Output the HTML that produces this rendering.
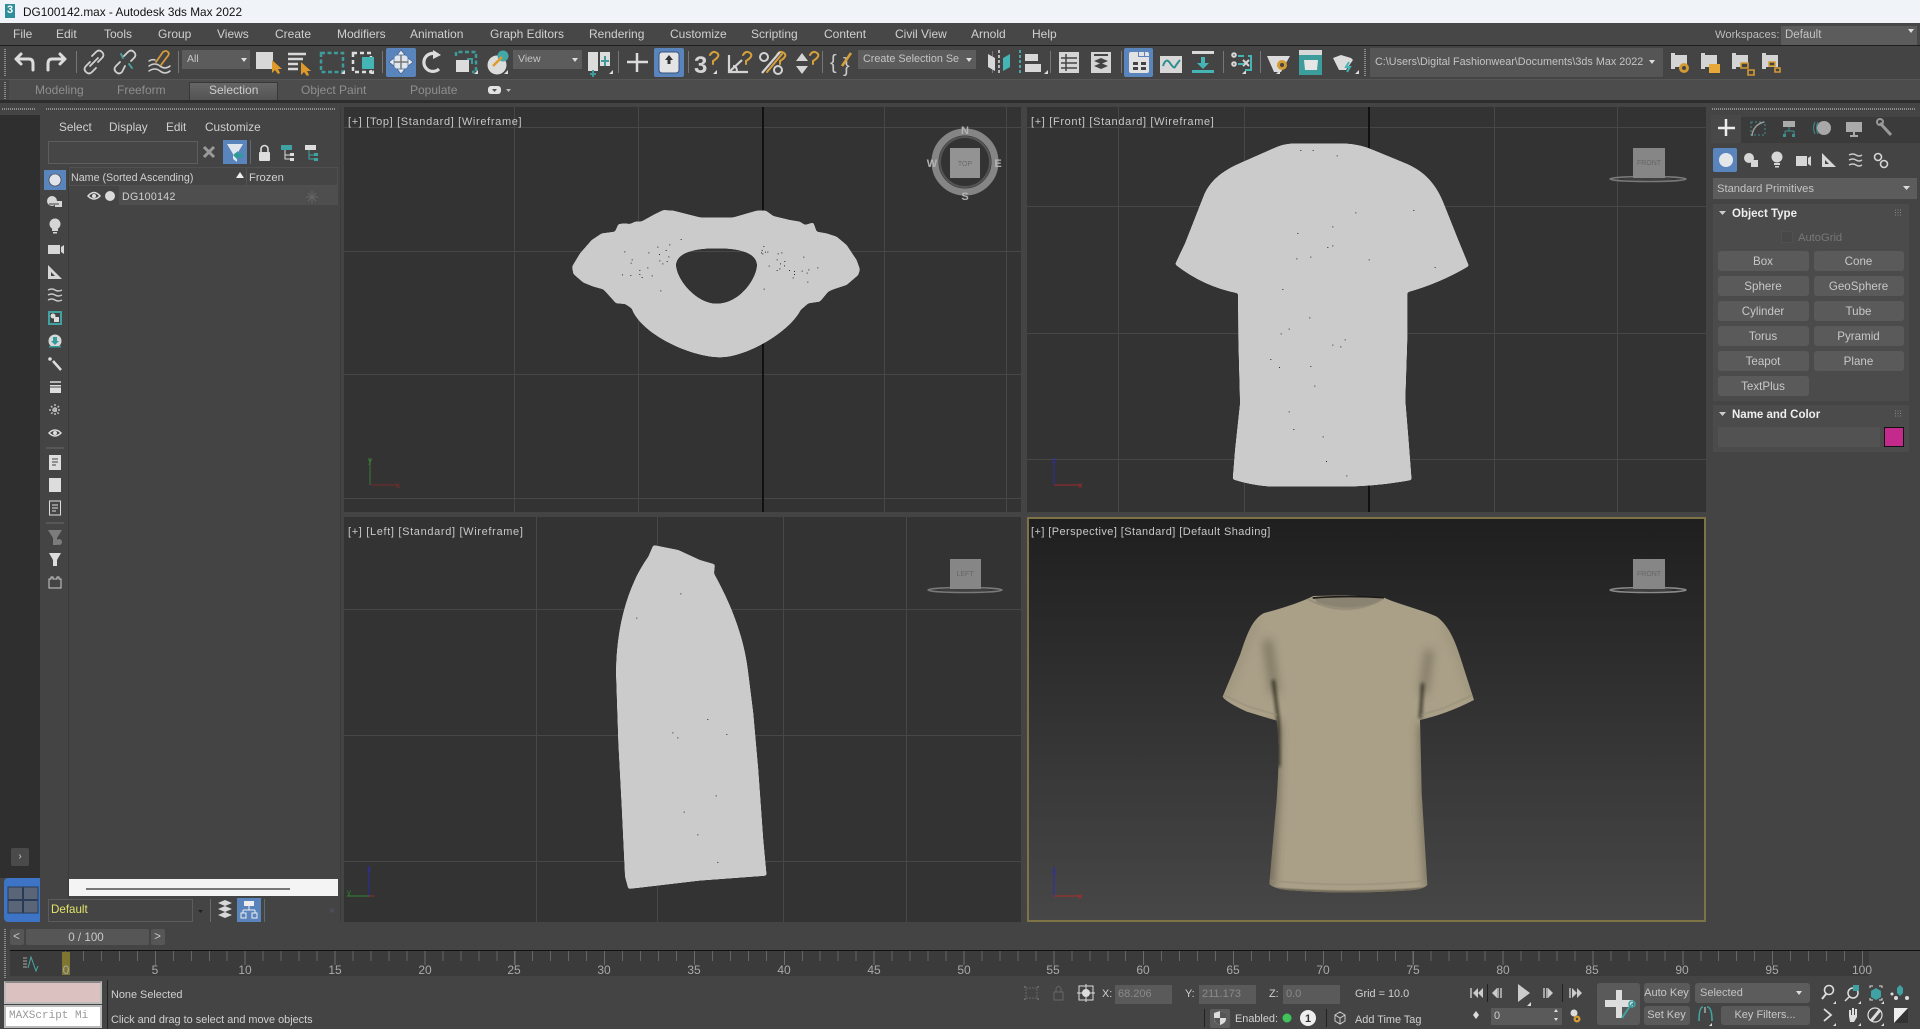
<!DOCTYPE html>
<html><head><meta charset="utf-8"><title>DG100142.max - Autodesk 3ds Max 2022</title>
<style>
html,body{margin:0;padding:0;width:1920px;height:1029px;overflow:hidden;background:#444;font:12px "Liberation Sans",sans-serif;color:#d0d0d0}
.t{position:absolute;white-space:nowrap;line-height:14px}
.b{position:absolute;box-sizing:border-box}
.btn{position:absolute;box-sizing:border-box;background:#5a5a5a;border-radius:3px;text-align:center;color:#c8c8c8;line-height:21px;height:20px;width:91px;font-size:11.6px;padding-right:1px}
.dd{position:absolute;box-sizing:border-box;background:#5c5c5c;color:#c4c4c4;padding-left:5px}
.vp{position:absolute;background:#333;overflow:hidden}
.g{position:absolute;background:#474747}
.lbl{position:absolute;left:4px;top:8px;font-size:11px;letter-spacing:.66px;color:#c8c8c8;white-space:nowrap;line-height:14px}
.grip{position:absolute;height:2px;background:repeating-linear-gradient(90deg,#8d8d8d 0 1px,transparent 1px 2px)}
.gripv{position:absolute;width:2px;background:repeating-linear-gradient(0deg,#8d8d8d 0 1px,transparent 1px 2px)}
.f{position:absolute;box-sizing:border-box;background:#5a5a5a;color:#8a8a8a;padding-left:3px;height:19px;line-height:19px}
.m{top:27px}
.n{color:#8f8f8f;top:83px}
.k{color:#aaa;transform:translateX(-50%);top:963px}
.s{font-size:10.9px}
svg{position:absolute;left:0;top:0}
</style></head><body>
<!-- title bar -->
<div class="b" style="left:0;top:0;width:1920px;height:23px;background:#f0f4f9"></div>
<div class="b" style="left:5px;top:4px;width:10px;height:14px;background:#2e8f9a;color:#fff;font:bold 11px/12px 'Liberation Sans',sans-serif;text-align:center">3</div>
<div class="t" style="left:23px;top:5px;color:#111;font-size:11.8px">DG100142.max - Autodesk 3ds Max 2022</div>
<!-- menu -->
<div class="b" style="left:0;top:23px;width:1920px;height:22px;background:#474747"></div>
<div class="b" style="left:0;top:45px;width:1920px;height:1px;background:#1f1f1f"></div>
<div class="t m" style="left:13px">File</div><div class="t m" style="left:56px">Edit</div><div class="t m" style="left:104px">Tools</div><div class="t m" style="left:158px">Group</div><div class="t m" style="left:217px">Views</div><div class="t m" style="left:275px">Create</div><div class="t m" style="left:337px">Modifiers</div><div class="t m" style="left:410px">Animation</div><div class="t m" style="left:490px">Graph Editors</div><div class="t m" style="left:589px">Rendering</div><div class="t m" style="left:670px">Customize</div><div class="t m" style="left:751px">Scripting</div><div class="t m" style="left:824px">Content</div><div class="t m" style="left:895px">Civil View</div><div class="t m" style="left:971px">Arnold</div><div class="t m" style="left:1032px">Help</div>
<div class="t" style="left:1715px;top:28px;font-size:11.2px;color:#bbb">Workspaces:</div>
<div class="dd" style="left:1781px;top:26px;width:136px;height:19px;line-height:19px;font-size:11.5px;padding-left:4px">Default</div>
<!-- main toolbar -->
<div class="gripv" style="left:4px;top:49px;height:27px"></div>
<div class="dd" style="left:182px;top:50px;width:68px;height:19px;line-height:19px;font-size:10.5px">All</div>
<div class="dd" style="left:513px;top:50px;width:69px;height:19px;line-height:19px;font-size:10.5px">View</div>
<div class="dd" style="left:858px;top:50px;width:118px;height:19px;line-height:18px;font-size:10.8px;padding-left:5px">Create Selection Se</div>
<div class="dd" style="left:1370px;top:48px;width:293px;height:29px;line-height:29px;font-size:10.8px;background:#555">C:\Users\Digital Fashionwear\Documents\3ds Max 2022</div>
<div class="gripv" style="left:1364px;top:49px;height:27px"></div>
<div class="b" style="left:386px;top:48px;width:30px;height:29px;background:#5a84bc;border-radius:2px"></div>
<div class="b" style="left:654px;top:48px;width:30px;height:29px;background:#5a84bc;border-radius:2px"></div>
<div class="b" style="left:1124px;top:48px;width:29px;height:29px;background:#5a84bc;border-radius:2px"></div>
<!-- ribbon -->
<div class="b" style="left:0;top:79px;width:1920px;height:1px;background:#565656"></div>
<div class="b" style="left:9px;top:80px;width:1911px;height:20px;background:#4c4c4c"></div>
<div class="gripv" style="left:4px;top:81px;height:18px"></div>
<div class="b" style="left:189px;top:82px;width:89px;height:18px;background:linear-gradient(#666,#535353);border:1px solid #383838;border-bottom:0"></div>
<div class="b" style="left:0;top:100px;width:1920px;height:3px;background:#2d2d2d"></div>
<div class="t n" style="left:35px">Modeling</div><div class="t n" style="left:117px">Freeform</div><div class="t n" style="left:209px;color:#ccc">Selection</div><div class="t n" style="left:301px">Object Paint</div><div class="t n" style="left:410px">Populate</div>
<!-- left strip / explorer -->
<div class="b" style="left:0;top:115px;width:40px;height:763px;background:#2f2f2f"></div>
<div class="grip" style="left:2px;top:108px;width:34px"></div>
<div class="grip" style="left:46px;top:108px;width:290px"></div>
<div class="grip" style="left:1712px;top:108px;width:204px"></div>
<div class="b" style="top:848px;width:18px;height:18px;left:11px;background:#4a4a4a;border-radius:2px;color:#ccc;text-align:center;line-height:18px;font-size:10px">&#8250;</div>
<div class="t" style="left:59px;top:120px;font-size:11.8px">Select</div><div class="t" style="left:109px;top:120px;font-size:11.8px">Display</div><div class="t" style="left:166px;top:120px;font-size:11.8px">Edit</div><div class="t" style="left:205px;top:120px;font-size:11.8px">Customize</div>
<div class="b" style="left:48px;top:141px;width:150px;height:23px;border:1px solid #5e5e5e;background:#464646"></div>
<div class="b" style="left:223px;top:140px;width:24px;height:24px;background:#5a84bc"></div>
<div class="b" style="left:250px;top:140px;width:1px;height:24px;background:#5f6a78"></div>
<div class="b" style="left:69px;top:167px;width:269px;height:19px;border:1px solid #505050;background:#454545"></div>
<div class="b" style="left:246px;top:167px;width:1px;height:38px;background:#525252"></div>
<div class="b" style="left:119px;top:186px;width:219px;height:19px;background:#4e4e4e"></div>
<div class="t" style="left:71px;top:171px;font-size:10.7px">Name (Sorted Ascending)</div>
<div class="t" style="left:249px;top:171px;font-size:11.2px">Frozen</div>
<div class="t" style="left:122px;top:190px;font-size:10.6px;letter-spacing:.3px">DG100142</div>
<div class="b" style="left:44px;top:170px;width:22px;height:20px;background:#5a84bc"></div>
<div class="b" style="left:68px;top:167px;width:1px;height:732px;background:#3a3a3a"></div>
<div class="b" style="left:340px;top:107px;width:1px;height:815px;background:#3c3c3c"></div>
<div class="b" style="left:69px;top:879px;width:269px;height:17px;background:#f4f4f4"></div>
<div class="b" style="left:86px;top:888px;width:204px;height:2px;background:#777"></div>
<div class="b" style="left:4px;top:878px;width:36px;height:44px;background:#3e74c6;border-radius:4px 0 0 4px"></div>
<div class="b" style="left:48px;top:899px;width:145px;height:23px;border:1px solid #5c5c5c;background:#444;color:#e3e36a;padding-left:2px;line-height:20px;font-size:11.6px">Default</div>
<div class="b" style="left:237px;top:898px;width:24px;height:24px;background:#5a84bc"></div>
<div class="b" style="left:210px;top:899px;width:1px;height:23px;background:#6a6a6a"></div>
<div class="b" style="left:264px;top:899px;width:1px;height:23px;background:#5f6a78"></div>
<div class="t" style="left:329px;top:904px;color:#57577a;font-size:10px;letter-spacing:-1px">&raquo;</div>

<!-- viewports -->
<div class="vp" style="left:344px;top:107px;width:677px;height:405px">
<div class="g" style="left:170px;top:0;width:1px;height:405px"></div><div class="g" style="left:294px;top:0;width:1px;height:405px"></div><div class="g" style="left:540px;top:0;width:1px;height:405px"></div><div class="g" style="left:662px;top:0;width:1px;height:405px"></div>
<div class="g" style="left:0;top:20px;width:677px;height:1px"></div><div class="g" style="left:0;top:144px;width:677px;height:1px"></div><div class="g" style="left:0;top:267px;width:677px;height:1px"></div><div class="g" style="left:0;top:391px;width:677px;height:1px"></div>
<div class="b" style="left:418px;top:0;width:2px;height:405px;background:#111"></div>
<div class="lbl">[+] [Top] [Standard] [Wireframe]</div></div>
<div class="vp" style="left:1027px;top:107px;width:679px;height:405px">
<div class="g" style="left:91px;top:0;width:1px;height:405px"></div><div class="g" style="left:217px;top:0;width:1px;height:405px"></div><div class="g" style="left:467px;top:0;width:1px;height:405px"></div><div class="g" style="left:590px;top:0;width:1px;height:405px"></div>
<div class="g" style="left:0;top:99px;width:679px;height:1px"></div><div class="g" style="left:0;top:226px;width:679px;height:1px"></div><div class="g" style="left:0;top:352px;width:679px;height:1px"></div><div class="g" style="left:0;top:20px;width:679px;height:1px"></div>
<div class="b" style="left:341px;top:0;width:2px;height:405px;background:#111"></div>
<div class="lbl">[+] [Front] [Standard] [Wireframe]</div></div>
<div class="vp" style="left:344px;top:517px;width:677px;height:405px">
<div class="g" style="left:192px;top:0;width:1px;height:405px"></div><div class="g" style="left:313px;top:0;width:1px;height:405px"></div><div class="g" style="left:439px;top:0;width:1px;height:405px"></div><div class="g" style="left:562px;top:0;width:1px;height:405px"></div>
<div class="g" style="left:0;top:92px;width:677px;height:1px"></div><div class="g" style="left:0;top:218px;width:677px;height:1px"></div><div class="g" style="left:0;top:344px;width:677px;height:1px"></div>
<div class="lbl">[+] [Left] [Standard] [Wireframe]</div></div>
<div class="vp" style="left:1027px;top:517px;width:679px;height:405px;box-sizing:border-box;border:2px solid #7d7344;background:linear-gradient(#1f1f1f,#474747)">
<div class="lbl" style="left:2px;top:6px;letter-spacing:.42px">[+] [Perspective] [Standard] [Default Shading]</div></div>

<!-- command panel -->
<div class="b" style="left:1711px;top:117px;width:209px;height:26px;background:#3b3b3b"></div>
<div class="b" style="left:1711px;top:115px;width:30px;height:28px;background:#484848"></div>
<div class="b" style="left:1713px;top:148px;width:24px;height:24px;background:#5a84bc;border-radius:2px"></div>
<div class="dd" style="left:1713px;top:178px;width:204px;height:21px;line-height:23px;font-size:11.2px;padding-left:4px">Standard Primitives</div>
<div class="b" style="left:1713px;top:204px;width:196px;height:197px;background:#4b4b4b"></div>
<div class="b" style="left:1713px;top:405px;width:196px;height:47px;background:#4b4b4b"></div>
<div class="t" style="left:1732px;top:207px;font-weight:bold;color:#eee;font-size:11.5px">Object Type</div>
<div class="t" style="left:1732px;top:408px;font-weight:bold;color:#eee;font-size:11.5px">Name and Color</div>
<div class="b" style="left:1781px;top:231px;width:12px;height:12px;border:1px solid #505050;background:#484848"></div>
<div class="t" style="left:1798px;top:231px;color:#777;font-size:11.2px">AutoGrid</div>
<div class="btn" style="left:1718px;top:251px">Box</div><div class="btn" style="left:1814px;top:251px;width:90px">Cone</div>
<div class="btn" style="left:1718px;top:276px">Sphere</div><div class="btn" style="left:1814px;top:276px;width:90px">GeoSphere</div>
<div class="btn" style="left:1718px;top:301px">Cylinder</div><div class="btn" style="left:1814px;top:301px;width:90px">Tube</div>
<div class="btn" style="left:1718px;top:326px">Torus</div><div class="btn" style="left:1814px;top:326px;width:90px">Pyramid</div>
<div class="btn" style="left:1718px;top:351px">Teapot</div><div class="btn" style="left:1814px;top:351px;width:90px">Plane</div>
<div class="btn" style="left:1718px;top:376px">TextPlus</div>
<div class="b" style="left:1718px;top:427px;width:162px;height:20px;background:#525252"></div>
<div class="b" style="left:1884px;top:427px;width:20px;height:20px;background:#c42a8c;border:1px solid #111"></div>

<!-- time slider -->
<div class="gripv" style="left:4px;top:928px;height:50px"></div>
<div class="btn" style="left:10px;top:929px;width:14px;height:16px;line-height:15px;background:#565656;border-radius:2px">&lt;</div>
<div class="btn" style="left:26px;top:929px;width:123px;height:16px;line-height:17px;background:#565656;border-radius:2px;padding-right:3px">0 / 100</div>
<div class="btn" style="left:151px;top:929px;width:14px;height:16px;line-height:15px;background:#565656;border-radius:2px">&gt;</div>
<div class="b" style="left:10px;top:950px;width:1910px;height:1px;background:#111"></div>
<div class="b" style="left:10px;top:951px;width:1859px;height:25px;background:#3b3b3b"></div>
<div class="b" style="left:65px;top:951px;width:1798px;height:10px;background:repeating-linear-gradient(90deg,#666 0 1px,transparent 1px 17.97px)"></div>
<div class="b" style="left:65px;top:951px;width:1798px;height:14px;background:repeating-linear-gradient(90deg,#6c6c6c 0 1px,transparent 1px 89.85px)"></div>
<div class="b" style="left:62px;top:952px;width:8px;height:23px;background:#7d7530"></div>
<div class="t k" style="left:66px">0</div><div class="t k" style="left:155px">5</div><div class="t k" style="left:245px">10</div><div class="t k" style="left:335px">15</div><div class="t k" style="left:425px">20</div><div class="t k" style="left:514px">25</div><div class="t k" style="left:604px">30</div><div class="t k" style="left:694px">35</div><div class="t k" style="left:784px">40</div><div class="t k" style="left:874px">45</div><div class="t k" style="left:964px">50</div><div class="t k" style="left:1053px">55</div><div class="t k" style="left:1143px">60</div><div class="t k" style="left:1233px">65</div><div class="t k" style="left:1323px">70</div><div class="t k" style="left:1413px">75</div><div class="t k" style="left:1503px">80</div><div class="t k" style="left:1592px">85</div><div class="t k" style="left:1682px">90</div><div class="t k" style="left:1772px">95</div><div class="t k" style="left:1862px">100</div>

<!-- status -->
<div class="b" style="left:4px;top:981px;width:98px;height:23px;background:#dcc1c1;border:2px solid #bbb;border-top-color:#888"></div>
<div class="b" style="left:4px;top:1005px;width:98px;height:23px;background:#fff;border:2px solid #bbb;color:#999;font:11px/19px 'Liberation Mono',monospace;padding-left:3px;overflow:hidden;white-space:nowrap">MAXScript Mi</div>
<div class="b" style="left:107px;top:980px;width:1px;height:49px;background:#222"></div>
<div class="t s" style="left:111px;top:988px">None Selected</div>
<div class="t s" style="left:111px;top:1013px">Click and drag to select and move objects</div>
<div class="t s" style="left:1102px;top:987px">X:</div><div class="f" style="left:1115px;top:985px;width:57px;font-size:11px">68.206</div>
<div class="t s" style="left:1185px;top:987px">Y:</div><div class="f" style="left:1199px;top:985px;width:57px;font-size:11px">211.173</div>
<div class="t s" style="left:1269px;top:987px">Z:</div><div class="f" style="left:1283px;top:985px;width:57px;font-size:11px">0.0</div>
<div class="t s" style="left:1355px;top:987px">Grid = 10.0</div>
<div class="b" style="left:1210px;top:1009px;width:20px;height:19px;background:#5c5c5c;border-radius:2px"></div>
<div class="t s" style="left:1235px;top:1012px">Enabled:</div>
<div class="t s" style="left:1355px;top:1013px">Add Time Tag</div>
<div class="b" style="left:1597px;top:983px;width:43px;height:42px;background:#5a5a5a;border-radius:3px"></div>
<div class="btn" style="left:1644px;top:983px;width:46px;height:20px;line-height:20px;font-size:11px">Auto Key</div>
<div class="dd" style="left:1695px;top:983px;width:115px;height:20px;line-height:20px;font-size:11px;border-radius:3px">Selected</div>
<div class="btn" style="left:1644px;top:1006px;width:46px;height:19px;line-height:19px;font-size:11px">Set Key</div>
<div class="btn" style="left:1721px;top:1006px;width:89px;height:19px;line-height:19px;font-size:11px">Key Filters...</div>
<div class="f" style="left:1491px;top:1008px;width:71px;height:17px;line-height:17px;color:#ccc;font-size:11px">0</div>

<!-- Artwork -->
<svg width="1920" height="1029" viewBox="0 0 1920 1029" fill="none" style="pointer-events:none">
<defs>
<filter id="bl1" x="-30%" y="-30%" width="160%" height="160%"><feGaussianBlur stdDeviation="14"/></filter>
<filter id="bl2" x="-30%" y="-30%" width="160%" height="160%"><feGaussianBlur stdDeviation="5"/></filter>
<filter id="bl3" x="-10%" y="-10%" width="120%" height="120%"><feGaussianBlur stdDeviation="1.2"/></filter>
<filter id="sm" x="-5%" y="-5%" width="110%" height="110%" color-interpolation-filters="sRGB"><feGaussianBlur in="SourceAlpha" stdDeviation="3"/><feComponentTransfer result="a"><feFuncA type="linear" slope="10" intercept="-4.5"/></feComponentTransfer><feFlood flood-color="#cbcbcb"/><feComposite in2="a" operator="in"/></filter>
<clipPath id="tee"><path d="M385 115C340 135 285 150 250 160C215 180 200 225 180 285L128 410Q135 425 200 455L290 482C300 560 295 640 290 720L268 972Q280 985 320 990Q500 1005 700 990Q730 987 742 975L725 700 720 480Q800 462 882 420L845 305C825 240 805 195 770 170C730 150 660 135 610 112L500 106 400 108Z"/></clipPath>
</defs>

<!-- top view shirt -->
<g transform="translate(560,200) scale(.33333)">
<path fill="#cbcbcb" filter="url(#sm)" fill-rule="evenodd" d="M310 30L340 32 420 52 520 52 590 32 618 32 640 48 690 60 720 65 735 75 760 67 770 95 800 100 830 110 860 135 890 180 900 208 895 225 860 255 820 268 805 275 780 305 745 310 722 330C690 395 560 472 480 472C390 472 240 400 215 325L195 312 168 310 150 290 130 268 100 260 70 248 40 222 36 200 60 160 95 120 125 100 165 95 175 72 195 70 210 72 225 65 245 64 285 42ZM348 195C350 165 385 150 440 146L500 146C555 150 590 165 591 195C590 235 540 311 470 311C410 311 350 240 348 195Z"/>
<path fill="#2c2c2c" d="M362 117h3v3h-3zM193 154h3v3h-3zM265 157h3v3h-3zM292 140h3v3h-3zM328 133h3v3h-3zM317 150h3v3h-3zM297 162h3v3h-3zM298 181h3v3h-3zM325 169h3v3h-3zM320 183h3v3h-3zM307 190h3v3h-3zM215 178h3v3h-3zM212 188h3v3h-3zM262 202h3v3h-3zM238 210h3v3h-3zM238 222h3v3h-3zM245 231h3v3h-3zM186 223h3v3h-3zM211 225h3v3h-3zM275 226h3v3h-3zM301 271h3v3h-3zM610 138h3v3h-3zM605 150h3v3h-3zM603 157h3v3h-3zM622 155h3v3h-3zM615 155h3v3h-3zM607 160h3v3h-3zM653 160h3v3h-3zM664 157h3v3h-3zM650 178h3v3h-3zM660 190h3v3h-3zM673 183h3v3h-3zM672 196h3v3h-3zM626 197h3v3h-3zM687 210h3v3h-3zM650 210h3v3h-3zM658 205h3v3h-3zM702 213h3v3h-3zM725 212h3v3h-3zM745 208h3v3h-3zM772 202h3v3h-3zM730 170h3v3h-3zM740 218h3v3h-3zM702 222h3v3h-3zM698 232h3v3h-3zM742 245h3v3h-3zM611 266h3v3h-3z"/>
</g>
<!-- front view shirt -->
<g transform="translate(1160,130) scale(.33333)">
<path fill="#cbcbcb" filter="url(#sm)" d="M405 40L550 40Q600 42 640 60L730 97C790 120 830 160 855 230L895 330 927 408Q840 460 742 487L742 630 736 810 745 920 755 1050Q650 1070 540 1070L330 1070Q270 1065 218 1048L225 960 240 820 235 630 234 490Q130 470 45 403L75 340 130 200C150 150 190 120 250 95L340 55Q370 40 405 40Z"/>
<path fill="#2c2c2c" d="M421 60h3v3h-3zM458 60h3v3h-3zM530 76h3v3h-3zM586 247h3v3h-3zM760 240h3v3h-3zM517 289h3v3h-3zM412 309h3v3h-3zM517 346h3v3h-3zM502 351h3v3h-3zM451 380h3v3h-3zM409 385h3v3h-3zM626 388h3v3h-3zM824 411h3v3h-3zM367 477h3v3h-3zM448 562h3v3h-3zM386 596h3v3h-3zM362 610h3v3h-3zM554 628h3v3h-3zM517 644h3v3h-3zM541 649h3v3h-3zM331 687h3v3h-3zM357 711h3v3h-3zM451 708h3v3h-3zM463 767h3v3h-3zM386 844h3v3h-3zM400 897h3v3h-3zM488 919h3v3h-3zM498 993h3v3h-3zM559 1036h3v3h-3z"/>
</g>
<!-- left view shirt -->
<g transform="translate(600,530) scale(.33333)">
<path fill="#cbcbcb" filter="url(#sm)" d="M160 45L235 60 300 90 345 103 342 130C380 200 430 300 445 430L460 550 475 720 490 930 500 1037 300 1052 85 1077 75 1040 65 830 55 640 48 430C48 300 80 170 145 80Z"/>
<path fill="#2c2c2c" d="M241 190h3v3h-3zM109 263h3v3h-3zM322 567h3v3h-3zM217 607h3v3h-3zM379 612h3v3h-3zM232 622h3v3h-3zM347 796h3v3h-3zM251 845h3v3h-3zM292 913h3v3h-3zM352 996h3v3h-3z"/>
</g>
<!-- perspective tee -->
<g transform="translate(1180,560) scale(.33333)">
<path fill="#aaa088" d="M385 115C340 135 285 150 250 160C215 180 200 225 180 285L128 410Q135 425 200 455L290 482C300 560 295 640 290 720L268 972Q280 985 320 990Q500 1005 700 990Q730 987 742 975L725 700 720 480Q800 462 882 420L845 305C825 240 805 195 770 170C730 150 660 135 610 112L500 106 400 108Z"/>
<g clip-path="url(#tee)">
<g filter="url(#bl1)" opacity=".8">
<path stroke="#4a4538" stroke-width="22" d="M288 490L282 720 268 985"/>
<path stroke="#4a4538" stroke-width="18" d="M728 490L732 720 748 985"/>
<path stroke="#5c5646" stroke-width="18" d="M262 240L285 400"/>
<path stroke="#5c5646" stroke-width="16" d="M748 270L730 400"/>
<path stroke="#8b8470" stroke-width="12" d="M125 420L180 290 225 185M885 420L845 300 795 185"/>
</g>
<g filter="url(#bl2)" opacity=".85">
<path stroke="#15140f" stroke-width="8" d="M280 360L295 480 296 620"/>
<path stroke="#15140f" stroke-width="8" d="M728 370L721 475"/>
</g>
<g filter="url(#bl3)">
<path stroke="#958d78" stroke-width="3" d="M130 405L205 440 292 465M722 465L790 445 878 405M272 962Q500 985 740 962"/>
<path stroke="#736c5a" stroke-width="8" d="M268 985Q500 1006 745 985"/>
<path stroke="#8d8571" stroke-width="4" d="M385 118Q500 178 610 116"/>
</g>
</g>
<path fill="#8a8371" d="M400 113Q500 108 612 113L590 128Q500 160 412 128Z" filter="url(#bl3)"/>
<path stroke="#1b1a17" stroke-width="5" d="M398 114Q500 106 612 113"/>
</g>

<!-- view gizmos -->
<g>
<circle cx="965" cy="162" r="30" stroke="#858585" stroke-width="7"/>
<circle cx="965" cy="162" r="25" stroke="#555" stroke-width="2"/>
<rect x="950" y="148" width="30" height="30" fill="#939393"/>
<text x="965" y="166" text-anchor="middle" font-size="7" fill="#6a6a6a" font-family="Liberation Sans">TOP</text>
<g font-family="Liberation Sans" font-weight="bold" font-size="11" fill="#b4b4b4" text-anchor="middle">
<text x="965" y="134">N</text><text x="998" y="167">E</text><text x="965" y="200">S</text><text x="932" y="167">W</text></g>
<ellipse cx="1648" cy="179" rx="38" ry="2.500" stroke="#7a7a7a" stroke-width="1.500"/><ellipse cx="1648" cy="179" rx="26" ry="1.200" fill="#404040"/><rect x="1633" y="148" width="32" height="30" fill="#868686"/><text x="1649" y="165" text-anchor="middle" font-size="7" fill="#666" font-family="Liberation Sans">FRONT</text>
<ellipse cx="1648" cy="590" rx="38" ry="2.500" stroke="#8a8a8a" stroke-width="1.500"/><ellipse cx="1648" cy="590" rx="26" ry="1.200" fill="#404040"/><rect x="1633" y="559" width="32" height="30" fill="#868686"/><text x="1649" y="576" text-anchor="middle" font-size="7" fill="#666" font-family="Liberation Sans">FRONT</text>
<ellipse cx="965" cy="590" rx="37" ry="2.500" stroke="#7a7a7a" stroke-width="1.500"/><ellipse cx="965" cy="590" rx="26" ry="1.200" fill="#404040"/><rect x="950" y="559" width="31" height="30" fill="#868686"/><text x="965" y="576" text-anchor="middle" font-size="7" fill="#666" font-family="Liberation Sans">LEFT</text>
</g>
<!-- tripods -->
<g stroke-width="1">
<path stroke="#3a7a3a" d="M370 485V458"/><path stroke="#7a2a2a" d="M370 485H398"/><path stroke="#2a2a8a" d="M370 485v1"/>
<path stroke="#2b2ba0" d="M1054 485V458"/><path stroke="#a02a2a" d="M1054 485H1082"/>
<path stroke="#2b2ba0" d="M369 896V866"/><path stroke="#2c8a2c" d="M347 896H369"/><path stroke="#a02a2a" d="M369 896h5"/>
<path stroke="#2b2bb0" d="M1054 896V867"/><path stroke="#b02a2a" d="M1054 896H1082"/>
</g>
<g font-family="Liberation Sans" font-size="8">
<text x="368" y="463" fill="#3a8a3a">y</text><text x="396" y="488" fill="#8a2a2a">x</text>
<text x="1052" y="463" fill="#3030a0">z</text><text x="1078" y="488" fill="#a02a2a">x</text>
<text x="367" y="872" fill="#3030a0">z</text><text x="347" y="895" fill="#2c8a2c">y</text>
<text x="1052" y="874" fill="#3030a0">z</text><text x="1078" y="899" fill="#b02a2a">x</text>
</g>

<!-- toolbar separators -->
<path stroke="#777" d="M76.500 51V73M178.500 51V73M382.500 51V73M618.500 51V73M688.500 51V73M822.500 51V73M992.500 51V73M1050.500 51V73M1121.500 51V73M1223.500 51V73M1260.500 51V73"/>
<!-- undo/redo -->
<g stroke="#dcdcdc" stroke-width="3" stroke-linecap="round" stroke-linejoin="round">
<path d="M17 59H29Q33 59 33 64V70M21 54L16 59 21 64"/>
<path d="M64 59H52Q48 59 48 64V70M60 54L65 59 60 64"/>
</g>
<!-- links -->
<g stroke="#d0d0d0" stroke-width="1.800" stroke-linecap="round">
<path d="M92 56L96 52Q99 49 102 52T102 58L98 62M96 68L92 72Q89 75 86 72T86 66L90 62M90 66L98 58"/>
<path d="M124 56L128 52Q131 49 134 52T134 58L131 61M125 66L122 72Q119 75 116 72T116 66L120 62"/>
<path stroke="#4aa9a9" d="M121 54l2 4M132 68l-3-4"/>
<path d="M149 66Q155 62 160 66T170 66M149 71Q155 67 160 71T170 71M149 61Q152 59 155 60" stroke-width="1.500"/>
<path stroke="#d79a3a" d="M156 62L163 52Q166 50 168 52T167 57L161 65"/>
</g>
<path fill="#ddd" d="M241 58h6l-3 4zM572 58h6l-3 4zM966 58h6l-3 4zM1649 60h6l-3 4zM1908 29h6l-3 4zM1796 991h6l-3 4z"/>
<!-- select tools -->
<rect x="256" y="52" width="17" height="17" fill="#d8d8d8"/><path fill="#e09a2a" d="M272 60L272 73 275 70 278 74 280 73 278 69 282 69Z"/>
<path stroke="#d8d8d8" stroke-width="2.500" d="M288 54H306M288 59H303M288 64H298M288 69H298"/><path fill="#e09a2a" d="M301 62V75L304 72 307 76 309 75 307 71 311 71Z"/>
<rect x="321" y="53" width="22" height="19" stroke="#3f9b9b" stroke-width="2.500" stroke-dasharray="4 2.500"/>
<path fill="#ddd" d="M345 70v4h-4zM374 70v4h-4zM478 70v4h-4zM508 70v4h-4zM613 70v4h-4zM717 70v4h-4zM1048 70v4h-4zM1246 70v4h-4zM1359 70v4h-4zM1280 70v4h-4z"/>
<rect x="353" y="53" width="18" height="19" stroke="#ddd" stroke-width="2.500" stroke-dasharray="4 3"/><rect x="362" y="57" width="12" height="12" fill="#45b4b4"/>
<!-- move -->
<circle cx="401" cy="62" r="8" fill="#dfe6ee"/><g fill="#e8edf3" stroke="#3d5f8c" stroke-width=".7"><path d="M401 50l4 5h-8zM401 74l4-5h-8zM389 62l5-4v8zM413 62l-5-4v8z"/></g>
<path stroke="#777" stroke-width="1.500" d="M401 55V69M394 62H408"/>
<!-- rotate -->
<path stroke="#dcdcdc" stroke-width="3.200" d="M439 69A9 9 0 1 1 438 55"/><path fill="#dcdcdc" d="M433 50l8 5-8 4z"/>
<!-- scale -->
<path stroke="#3f9b9b" stroke-width="2.500" stroke-dasharray="4 2.500" d="M456 56V52H476V72H472"/><rect x="456" y="60" width="13" height="12" fill="#dcdcdc"/>
<path stroke="#3f9b9b" stroke-width="2" d="M467 59H472V64"/>
<!-- placement -->
<circle cx="497" cy="65" r="9.500" fill="#dcdcdc"/><circle cx="503" cy="56" r="5.500" fill="#43a8a8"/><path stroke="#e09a2a" stroke-width="2.500" d="M493 66L502 57"/>
<!-- pivot -->
<rect x="588" y="52" width="10" height="19" fill="#dcdcdc"/><rect x="600" y="52" width="10" height="14" fill="#dcdcdc"/><path stroke="#3f9b9b" stroke-width="2" d="M593 70V77M590 74H596M605 56V66M601 61H609"/>
<!-- manipulate -->
<path stroke="#dcdcdc" stroke-width="2.500" d="M637 53V72M627 62H648"/>
<rect x="659" y="52" width="20" height="21" rx="3" fill="#e4e4e4" stroke="#34527d"/><path fill="#333" d="M669 55l4 5h-2.500v4h-3v-4H665z"/>
<!-- snap -->
<text x="694" y="73" font-family="Liberation Sans" font-weight="bold" font-size="24" fill="#d4d4d4">3</text>
<g stroke="#d6a13a" stroke-width="2" stroke-linecap="round"><path d="M710 55Q713 50 717 53T713 61V64M743 55Q746 50 750 53T746 61V64M777 55Q780 50 784 53T780 61V64M810 55Q813 50 817 53T813 61V64"/><path d="M767 72L782 54"/></g>
<path stroke="#d4d4d4" stroke-width="2.200" d="M729 55V72H748M729 72L742 60"/><path stroke="#d4d4d4" stroke-width="2" d="M737 72Q737 66 733 66"/>
<circle cx="764" cy="57" r="4" stroke="#d4d4d4" stroke-width="2"/><circle cx="778" cy="70" r="4" stroke="#d4d4d4" stroke-width="2"/><path stroke="#d4d4d4" stroke-width="2.200" d="M762 73L780 52"/>
<path fill="#d4d4d4" d="M802 53l6 8h-12zM802 74l6-8h-12z"/>
<!-- named sel -->
<text x="830" y="69" font-family="Liberation Sans" font-size="20" fill="#c8c8c8">{</text><text x="843" y="72" font-family="Liberation Sans" font-size="20" fill="#c8c8c8">}</text>
<path stroke="#d6a13a" stroke-width="2.500" d="M842 66L851 53"/>
<!-- mirror / align -->
<path fill="#d8d8d8" d="M988 54l7 4v13l-7-4z"/><path fill="#45b4b4" d="M1010 54l-7 4v13l7-4z"/><path stroke="#ddd" stroke-width="1.500" stroke-dasharray="3 2" d="M999 50V75"/>
<path stroke="#45b4b4" stroke-width="1.800" stroke-dasharray="3 2" d="M1020 50V74"/><rect x="1025" y="54" width="13" height="7" fill="#d8d8d8"/><rect x="1025" y="64" width="16" height="8" fill="#d8d8d8"/>
<!-- tables -->
<rect x="1059" y="52" width="20" height="21" fill="#d4d4d4"/><path stroke="#444" stroke-width="1.500" d="M1061 58H1077M1061 63H1077M1061 68H1077M1066 54V71"/>
<rect x="1091" y="52" width="20" height="21" fill="#d4d4d4"/><path fill="#444" d="M1094 54H1108V56H1094zM1101 58l7 3-7 3-7-3zM1101 63l7 3-7 3-7-3z"/>
<rect x="1129" y="52" width="20" height="21" rx="2" fill="#e2e2e2"/><path fill="#444" d="M1133 62h5v3h-5zM1141 62h5v3h-5zM1133 67h5v3h-5zM1141 67h5v3h-5z"/><path fill="#5a84bc" d="M1138 52h1v5h-1zM1144 52h1v5h-1zM1139 56h10v1h-10z"/>
<rect x="1160" y="51" width="22" height="22" fill="#d8d8d8"/><path fill="#444" d="M1160 51h22v5h-22z"/><path stroke="#2f8f8f" stroke-width="2" d="M1163 66Q1166 57 1170 63T1175 67 1180 60"/>
<path fill="#d8d8d8" d="M1192 51h22v3h-22z"/><path fill="#45b4b4" d="M1201 57h4v6h4l-6 6-6-6h4zM1192 70h22v3h-22z"/>
<!-- schematic -->
<g stroke="#d8d8d8" stroke-width="2"><circle cx="1234" cy="55" r="1.800"/><circle cx="1234" cy="64" r="1.800"/><path d="M1243 60l6 6M1249 60l-6 6"/></g><path stroke="#45b4b4" stroke-width="2" d="M1238 56h6M1238 64h6M1248 56h3V70h-6"/>
<!-- material/render -->
<path fill="#dcdcdc" d="M1267 56H1290L1281 72H1274Z"/><circle cx="1282" cy="65" r="5" fill="#d49a33"/><circle cx="1282" cy="65" r="2" fill="#444"/>
<rect x="1299" y="50" width="23" height="25" fill="#3d9c9c"/><path fill="#d8d8d8" d="M1299 50h23v5h-23z"/><path fill="#e6e6e6" d="M1304 60h14l-1 10h-12z"/>
<path fill="#dcdcdc" d="M1333 58l8-3 10 3 2 2-7 10h-7z"/><path stroke="#45b4b4" stroke-width="2" d="M1349 62l-3 5h4l-3 5"/>
<!-- project icons -->
<g fill="#d4d4d4"><path d="M1671 53h4v16h-4zM1675 55h12v12h-12zM1701 53h4v16h-4zM1705 55h12v12h-12zM1732 53h4v16h-4zM1736 55h12v12h-12zM1762 53h4v16h-4zM1766 55h12v12h-12z"/></g>
<circle cx="1684" cy="68" r="5" fill="#d49a33"/><circle cx="1684" cy="68" r="2" fill="#444"/>
<rect x="1709" y="64" width="11" height="9" fill="#e8a838"/>
<path stroke="#d49a33" stroke-width="1.600" fill="#444" d="M1741 63h7v5h-7zM1748 70h6v5h-6zM1769 62h6v4h-6zM1775 68h5v4h-5z"/>
<!-- ribbon pill -->
<rect x="488" y="86" width="13" height="8" rx="3" fill="#e2e2e2"/><path fill="#555" d="M492 89h5l-2.500 3z"/><path fill="#bbb" d="M506 89h5l-2.500 3z"/>
<!-- explorer icons -->
<path stroke="#9a9a9a" stroke-width="3" d="M204 147l10 10M214 147l-10 10"/>
<path fill="#dfe6ee" d="M227 144H243L237 154V162L233 159V154Z"/><path fill="#2e9a9a" d="M233 155l5-4v2.500h5v4h-5v2.500z"/>
<rect x="259" y="152" width="11" height="9" rx="1" fill="#ddd"/><path stroke="#ddd" stroke-width="1.600" d="M261 152v-3a3.500 3.500 0 0 1 7 0v3"/>
<rect x="281" y="145" width="11" height="5" fill="#3fa3a3"/><path stroke="#ddd" d="M285 150V159H290M285 155H290"/><path fill="#ddd" d="M290 153h4v3h-4zM290 158h4v3h-4z"/>
<rect x="305" y="145" width="11" height="5" fill="#ddd"/><path stroke="#3fa3a3" d="M309 150V159H314M309 155H314"/><path fill="#3fa3a3" d="M314 153h4v3h-4zM314 158h4v3h-4z"/>
<path fill="#eee" d="M240 172l4 6h-8z"/>
<path d="M88 196Q94 189 100 196Q94 202 88 196Z" stroke="#ddd" stroke-width="1.500"/><circle cx="94" cy="196" r="2" fill="#ddd"/><circle cx="110" cy="196" r="5" fill="#d9d9d9"/>
<path stroke="#666" d="M312 191V203M306 197H318M308 193l8 8M316 193l-8 8"/>
<!-- explorer column -->
<g fill="#d6d6d6">
<circle cx="55" cy="180" r="6" fill="#e0e4ea" stroke="#333" stroke-width=".6"/>
<circle cx="52" cy="201" r="5"/><path d="M55 201h7v6h-7z"/><path stroke="#3c3c3c" d="M49 204h10"/>
<circle cx="55" cy="224" r="5.500"/><path d="M52 229h6v2h-6zM53 232h4v1.500h-4z"/>
<path d="M48 245h12v9h-12zM61 247l3-2v9l-3-2z"/>
<path fill-rule="evenodd" d="M48 265l14 14h-14zM51 272v4h4z"/>
</g>
<path stroke="#c9c9c9" stroke-width="1.400" d="M48 290Q52 288 55 290T62 290M48 295Q52 293 55 295T62 295M48 300Q52 298 55 300T62 300"/>
<rect x="49" y="312" width="12" height="12" stroke="#3fa3a3" stroke-width="2"/><circle cx="53" cy="316" r="2.500" fill="#ddd"/><rect x="54" y="317" width="5" height="5" fill="#ddd"/>
<circle cx="55" cy="341" r="6.500" fill="#d6d6d6"/><path fill="#2f9d9d" d="M53 337h4v4h2l-4 4-4-4h2zM49 346h12v1.500h-12z"/>
<circle cx="50" cy="359" r="1.800" fill="#ddd"/><path stroke="#ddd" stroke-width="2.500" d="M53 361L61 370"/>
<path stroke="#ddd" stroke-width="1.500" d="M50 382h11"/><rect x="50" y="385" width="11" height="8" fill="#ddd"/><path stroke="#444" d="M50 387h11"/>
<path stroke="#bbb" stroke-width="1.500" stroke-dasharray="2 1" d="M55 404v12M49 410h12M51 406l8 8M59 406l-8 8"/>
<path d="M49 433Q55 427 61 433Q55 439 49 433Z" stroke="#ddd" stroke-width="1.500"/><circle cx="55" cy="433" r="2" fill="#ddd"/>
<path stroke="#6a6a6a" d="M46 448H64M46 523H64"/>
<rect x="49" y="455" width="12" height="15" fill="#ddd"/><path stroke="#444" d="M52 459h6M52 462h6M52 465h4"/>
<rect x="49" y="478" width="12" height="14" fill="#ddd"/>
<rect x="49.500" y="501" width="11" height="14" stroke="#ddd"/><path stroke="#ddd" d="M52 505h6M52 508h6M52 511h4"/>
<path fill="#7c7c7c" d="M48 530H62L57 538V545H53V538Z"/><circle cx="59" cy="542" r="3" fill="#7c7c7c"/>
<path fill="#ddd" d="M49 553H61L57 560V566H53V560Z"/>
<path stroke="#ccc" d="M49 579v9h12v-9h-2v-2h-2v2h-4v-2h-2v2z"/>
<!-- viewport layout -->
<g fill="#5a6678" stroke="#2b3b57"><rect x="8" y="887" width="14.500" height="12.500"/><rect x="23.500" y="887" width="14.500" height="12.500"/><rect x="8" y="900.500" width="14.500" height="12.500"/><rect x="23.500" y="900.500" width="14.500" height="12.500"/></g>
<!-- layer icons -->
<path fill="#d8d8d8" d="M225 900l7 3-7 3-7-3zM225 906l7 3-7 3-7-3zM225 912l7 3-7 3-7-3z"/>
<path fill="#222" d="M198 910h5l-2.500 3z"/>
<rect x="244" y="901" width="10" height="5" fill="#eee"/><path stroke="#eee" d="M249 906v4M243 910h12M243 910v3M255 910v3"/><rect x="241" y="913" width="5" height="5" stroke="#eee"/><rect x="252" y="913" width="5" height="5" stroke="#eee"/>
<!-- track icon -->
<path stroke="#aaa" d="M23 958h4M23 961h4M23 964h4M23 967h4"/><path stroke="#4aa9a9" d="M28 968L31 957 36 971 38 966"/>
<!-- command tabs -->
<path stroke="#eee" stroke-width="2.500" d="M1726 119V136M1718 128H1735"/>
<rect x="1751" y="122" width="14" height="13" stroke="#3f8f8f" stroke-dasharray="2 2"/><path stroke="#999" stroke-width="1.500" d="M1752 136Q1753 125 1764 122"/>
<rect x="1783" y="121" width="12" height="6" fill="#aaa"/><path stroke="#3f8f8f" d="M1789 127V131M1785 131H1794M1785 131V134M1794 131V134"/><rect x="1783" y="134" width="3" height="3" fill="#3f8f8f"/><rect x="1792" y="134" width="3" height="3" fill="#3f8f8f"/>
<circle cx="1824" cy="128" r="7" fill="#a8a8a8"/><path stroke="#3f8f8f" d="M1815 122Q1812 128 1815 134M1818 122Q1815 128 1818 134"/>
<rect x="1846" y="122" width="16" height="10" fill="#aaa"/><path stroke="#aaa" stroke-width="2" d="M1854 132V136M1850 136H1858"/>
<path stroke="#999" stroke-width="3" d="M1880 123L1891 135"/><circle cx="1880" cy="122" r="3" stroke="#999" stroke-width="2"/>
<circle cx="1726" cy="160" r="7" fill="#e3e7ec"/>
<g fill="#d6d6d6"><circle cx="1749" cy="158" r="5"/><rect x="1751" y="160" width="7" height="7"/>
<circle cx="1777" cy="157" r="5.500"/><path d="M1774 163h6v2h-6zM1775 166h4v1.500h-4z"/><path d="M1796 156h11v10h-11zM1808 158l3-2v10l-3-2z"/>
<path fill-rule="evenodd" d="M1822 153l14 14h-14zM1825 160v4h4z"/></g>
<path stroke="#c9c9c9" stroke-width="1.400" d="M1849 155Q1853 153 1856 155T1862 155M1849 160Q1853 158 1856 160T1862 160M1849 165Q1853 163 1856 165T1862 165"/>
<circle cx="1878" cy="157" r="3.500" stroke="#d6d6d6" stroke-width="1.600"/><circle cx="1884" cy="164" r="3.500" stroke="#d6d6d6" stroke-width="1.600"/>
<path fill="#ddd" d="M1903 186h7l-3.500 4z"/>
<path fill="#ccc" d="M1719 211h7l-3.500 4zM1719 412h7l-3.500 4z"/>
<path stroke="#888" stroke-dasharray="1 1.500" d="M1895 210h7M1895 212.500h7M1895 215h7M1895 411h7M1895 413.500h7M1895 416h7"/>
<!-- coord icons -->
<rect x="1026" y="988" width="11" height="10" stroke="#666" stroke-dasharray="2 1"/><rect x="1024" y="986" width="2" height="2" fill="#666"/><rect x="1037" y="998" width="2" height="2" fill="#666"/><rect x="1024" y="998" width="2" height="2" fill="#666"/><rect x="1037" y="986" width="2" height="2" fill="#666"/>
<rect x="1054" y="992" width="9" height="8" stroke="#666"/><path stroke="#666" d="M1056 992v-3a2.500 2.500 0 0 1 5 0v3"/>
<rect x="1079" y="986" width="14" height="14" stroke="#ddd"/><circle cx="1086" cy="993" r="4" fill="#ddd"/><path stroke="#ddd" d="M1086 984v18M1077 993h18"/>
<!-- time tag row -->
<path stroke="#222" d="M1204.500 1009v18M1326.500 1009v18"/>
<path fill="#ddd" d="M1214 1013l6-2 6 2v6q0 4-6 6-6-2-6-6z"/><path fill="#555" d="M1220 1011l6 2v5h-6zM1214 1018h6v7q-6-2-6-7z"/>
<circle cx="1287" cy="1018" r="4.500" fill="#3fc45a"/><circle cx="1308" cy="1018" r="8" fill="#eee"/>
<text x="1308" y="1022" text-anchor="middle" font-size="11" font-weight="bold" fill="#333" font-family="Liberation Sans">1</text>
<path stroke="#ccc" d="M1340 1012l5 3v6l-5 3-5-3v-6zM1335 1015l5 3 5-3M1340 1018v6"/>
<!-- anim controls -->
<path stroke="#ccc" stroke-width="1.400" d="M1471 988v10M1570 988v10M1501 988v10M1498 988v10M1547 988v10M1544 988v10"/>
<path fill="#ccc" d="M1478 988l-5 5 5 5zM1483 988l-5 5 5 5zM1497 988l-5 5 5 5zM1518 984l12 9-12 9zM1548 988l5 5-5 5zM1572 988l5 5-5 5zM1577 988l5 5-5 5z"/>
<path stroke="#222" d="M1487.500 984v18M1562.500 984v18"/>
<path fill="#ddd" d="M1531 1002v4h-4zM1473 1015l3-4v8zM1479 1015l-3-4v8zM1554 1012l2-3 2 3zM1554 1018l2 3 2-3z"/>
<circle cx="1574" cy="1013" r="3.500" fill="#ddd"/><circle cx="1577" cy="1019" r="3.500" fill="#d49a33"/><circle cx="1577" cy="1019" r="1.200" fill="#444"/>
<!-- key -->
<rect x="1616" y="990" width="6" height="28" fill="#ddd"/><rect x="1605" y="1000" width="28" height="7" fill="#ddd"/>
<path stroke="#3fa3a3" stroke-width="2" d="M1622 1018L1630 1006M1633 1003l-2 3"/><circle cx="1632" cy="1004" r="3" stroke="#3fa3a3" stroke-width="1.600"/>
<path stroke="#3fa3a3" stroke-width="1.600" d="M1699 1021Q1699 1007 1703 1007M1712 1021Q1712 1007 1707 1007"/><path stroke="#ddd" d="M1705 1007v6"/><path fill="#ddd" d="M1712 1023v3h-3z"/>
<!-- nav -->
<circle cx="1829" cy="990" r="4.500" stroke="#ddd" stroke-width="1.600"/><path stroke="#ddd" stroke-width="2" d="M1826 994L1822 999"/>
<circle cx="1853" cy="993" r="5" stroke="#ddd" stroke-width="1.500"/><rect x="1853" y="985" width="6" height="6" fill="#3fa3a3"/><path stroke="#ddd" stroke-width="1.500" d="M1849 997L1845 1001"/>
<path stroke="#ddd" d="M1870 988v-2h3M1882 988v-2h-3M1870 998v2h3M1882 998v2h-3"/><path fill="#3fa3a3" d="M1876 988l5 3v6l-5 3-5-3v-6z"/>
<path fill="#3fa3a3" d="M1900 985l3 3v5l-3 3-3-3v-5z"/><circle cx="1896" cy="998" r="2" fill="#ddd"/><circle cx="1907" cy="998" r="2" fill="#ddd"/><circle cx="1892" cy="994" r="1.500" fill="#ddd"/>
<path stroke="#ddd" stroke-width="1.800" d="M1824 1009L1831 1015 1824 1021"/>
<path fill="#ddd" d="M1849 1016v-6h2v5h1v-7h2v7h1v-6h2v8l-3 5h-4z"/>
<circle cx="1875" cy="1015" r="7" stroke="#ddd" stroke-width="1.200"/><path stroke="#ddd" stroke-width="3" d="M1871 1021L1880 1010"/>
<rect x="1894" y="1008" width="14" height="15" fill="#eee"/><path fill="#333" d="M1894 1023l14-15v15z"/>
<path fill="#ddd" d="M1836 1023v3h-3zM1861 1023v3h-3zM1884 1023v3h-3zM1836 1001v3h-3zM1861 1001v3h-3zM1884 1001v3h-3z"/>
</svg>
</body></html>
